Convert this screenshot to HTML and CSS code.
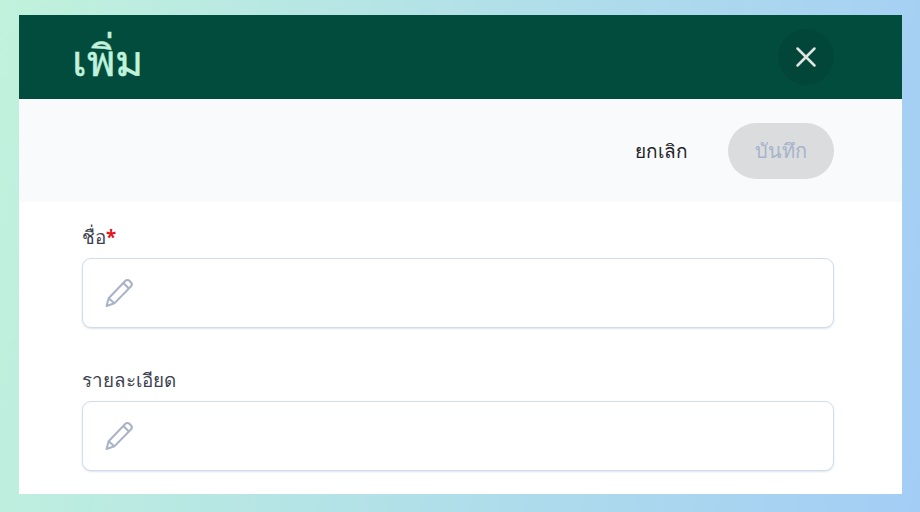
FILE: index.html
```html
<!DOCTYPE html>
<html lang="th">
<head>
<meta charset="utf-8">
<title>เพิ่ม</title>
<link rel="stylesheet" href="styles.css">
</head>
<body>
<main class="panel">
  <header class="head">
    <h1 class="title">เพิ่ม</h1>
    <button class="close" type="button" aria-label="ปิด">
      <svg viewBox="0 0 24 24" width="24" height="24"><path d="M3.500 3.500 20.500 20.500M20.500 3.500 3.500 20.500" fill="none" stroke="currentColor" stroke-width="2.500" stroke-linecap="round"/></svg>
    </button>
  </header>
  <div class="bar">
    <button class="cancel" type="button">ยกเลิก</button>
    <button class="save" type="button">บันทึก</button>
  </div>
  <form class="form">
    <div class="field">
      <label class="label">ชื่อ<span class="req">*</span></label>
      <div class="input">
        <svg class="pen" viewBox="0 0 30 30" width="31" height="31"><path d="M2.500 28 4.500 20.500 20.500 3.800a3 3 0 0 1 4.300 0l1.200 1.200a3 3 0 0 1 0 4.200L10 25.500ZM18.700 5.700l5.700 5.600M4.500 20.500l5.500 5" fill="none" stroke="currentColor" stroke-width="2" stroke-linejoin="round"/></svg>
      </div>
    </div>
    <div class="field">
      <label class="label">รายละเอียด</label>
      <div class="input">
        <svg class="pen" viewBox="0 0 30 30" width="31" height="31"><path d="M2.500 28 4.500 20.500 20.500 3.800a3 3 0 0 1 4.300 0l1.200 1.200a3 3 0 0 1 0 4.200L10 25.500ZM18.700 5.700l5.700 5.600M4.500 20.500l5.500 5" fill="none" stroke="currentColor" stroke-width="2" stroke-linejoin="round"/></svg>
      </div>
    </div>
  </form>
</main>
</body>
</html>
```
FILE: styles.css
```css
* { box-sizing: border-box; }
html, body { height: 100%; }
body {
  margin: 0;
  padding: 15px 18px 18px 19px;
  background: linear-gradient(100deg, #c0f2dc 0%, #a3cdf5 100%);
  font-family: "Noto Sans", "Liberation Sans", sans-serif;
  overflow: hidden;
}
.panel {
  height: 479px;
  background: #fff;
  overflow: hidden;
}
.head {
  height: 84px;
  background: #024c3e;
  display: flex;
  align-items: center;
  justify-content: space-between;
  padding: 0 68px 0 53px;
}
.title {
  margin: 4px 0 0;
  color: #c0f2dc;
  font-size: 43px;
  font-weight: 400;
  line-height: 1;
  -webkit-text-stroke: .5px #c0f2dc;
}
.close {
  width: 56px;
  height: 56px;
  border: 0;
  border-radius: 50%;
  background: #02463a;
  color: #dfe5e3;
  display: flex;
  align-items: center;
  justify-content: center;
  padding: 0;
}
.bar {
  height: 103px;
  background: #f9fafc;
  display: flex;
  align-items: center;
  justify-content: flex-end;
  gap: 40px;
  padding: 0 68px 0 0;
}
.cancel, .save {
  border: 0;
  background: none;
  font: inherit;
  font-size: 19px;
  padding: 0;
}
.cancel { color: #1f2328; }
.save {
  width: 106px;
  height: 56px;
  border-radius: 28px;
  background: #dbdcde;
  color: #a6b4cb;
  font-size: 20px;
}
.form {
  padding: 22px 68px 0 63px;
  display: flex;
  flex-direction: column;
  gap: 39px;
}
.field { display: flex; flex-direction: column; gap: 8px; }
.label {
  color: #3c4250;
  font-size: 18.800px;
  line-height: 26px;
  height: 26px;
}
.req { color: #e3171f; font-weight: 700; }
.input {
  height: 70px;
  border: 1.500px solid #d3dceb;
  border-radius: 9px;
  background: #fff;
  box-shadow: 0 1px 2px rgba(170, 185, 215, .4);
  display: flex;
  align-items: center;
  padding-left: 21px;
}
.pen { color: #a9b3c8; margin-top: -2px; }
```
